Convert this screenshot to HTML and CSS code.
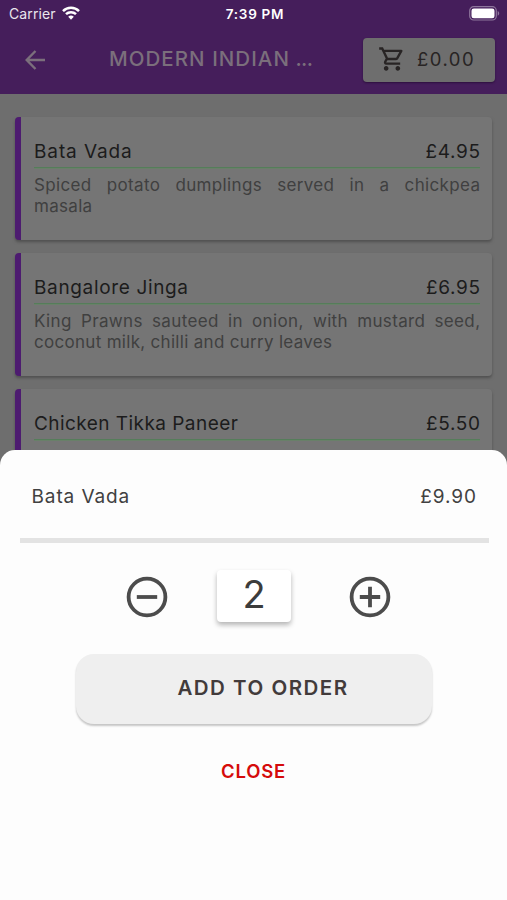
FILE: index.html
```html
<!DOCTYPE html>
<html lang="en">
<head>
<meta charset="utf-8">
<title>Modern Indian menu</title>
<link rel="stylesheet" href="styles.css">
</head>
<body>
<div class="phone">
  <header class="top">
    <div class="status">
      <div class="carrier"><span>Carrier</span>
        <svg width="18" height="14" viewBox="0 0 18 14" fill="none" stroke="#fff" stroke-width="2.5"><path d="M1 5.1a11.3 11.3 0 0 1 16 0M4 8.2a7.1 7.1 0 0 1 10 0"/><path d="M9 13.7 6.2 10.8a4 4 0 0 1 5.6 0z" fill="#fff" stroke="none"/></svg>
      </div>
      <span class="clock">7:39 PM</span>
      <svg class="battery" width="31" height="15" viewBox="0 0 31 15"><rect x=".7" y=".7" width="26.6" height="13.3" rx="4" fill="none" stroke="#8e769c" stroke-width="1.2"/><rect x="2.5" y="2.5" width="23" height="9.7" rx="2.3" fill="#fff"/><path d="M28.7 5v4.7c2-.8 2-3.9 0-4.7z" fill="#8e769c"/></svg>
    </div>
    <div class="nav">
      <svg class="back" width="22" height="20" viewBox="0 0 22 20" fill="none" stroke="#7b6f7c" stroke-width="2.4"><path d="M20 10H2.500M10.500 1 1.700 10l8.800 9"/></svg>
      <h1 class="title"><span class="t-title">MODERN INDIAN</span> <span class="dots">...</span></h1>
      <div class="basket">
        <svg width="28" height="28" viewBox="0 0 24 24" fill="#282424"><path d="M15.55 13c.75 0 1.41-.41 1.75-1.03l3.58-6.49A.996.996 0 0 0 20.01 4H5.21l-.94-2H1v2h2l3.6 7.59-1.35 2.44C4.52 15.37 5.48 17 7 17h12v-2H7l1.1-2h7.45zM6.16 6h12.15l-2.76 5H8.53L6.16 6zM7 18c-1.1 0-1.99.9-1.99 2S5.900 22 7 22s2-.9 2-2-.9-2-2-2zm10 0c-1.100 0-1.990.9-1.990 2s.89 2 1.990 2 2-.9 2-2-.9-2-2-2z"/></svg>
        <span class="t-total">£0.00</span>
      </div>
    </div>
  </header>
  <main class="menu">
    <article class="card">
      <div class="row"><h2 class="n1">Bata Vada</h2><span class="price">£4.95</span></div>
      <p class="desc"><span class="first">Spiced potato dumplings served in a chickpea</span><span class="d1">masala</span></p>
    </article>
    <article class="card">
      <div class="row"><h2 class="n2">Bangalore Jinga</h2><span class="price">£6.95</span></div>
      <p class="desc"><span class="first">King Prawns sauteed in onion, with mustard seed,</span><span class="d2">coconut milk, chilli and curry leaves</span></p>
    </article>
    <article class="card">
      <div class="row"><h2 class="n3">Chicken Tikka Paneer</h2><span class="price">£5.50</span></div>
    </article>
  </main>
  <section class="sheet">
    <div class="item"><span class="n1">Bata Vada</span><span class="sum">£9.90</span></div>
    <div class="rule"></div>
    <div class="stepper">
      <svg width="42" height="42" viewBox="0 0 42 42" fill="none" stroke="#4c4c4c" stroke-width="3.8"><circle cx="21" cy="21" r="18.4"/><path d="M10.800 21h20.400"/></svg>
      <div class="qty">2</div>
      <svg width="42" height="42" viewBox="0 0 42 42" fill="none" stroke="#4c4c4c" stroke-width="3.8"><circle cx="21" cy="21" r="18.4"/><path d="M10.800 21h20.400M21 10.800v20.400"/></svg>
    </div>
    <div class="add"><span class="t-add">ADD TO ORDER</span></div>
    <div class="close"><span class="t-close">CLOSE</span></div>
  </section>
</div>
</body>
</html>
```
FILE: styles.css
```css
* { box-sizing: border-box; }
body { margin: 0; font-family: Inter, "Liberation Sans", sans-serif; }
h1, h2, p { margin: 0; font-weight: 400; }
svg { display: block; flex: none; }
.phone { position: relative; width: 507px; height: 900px; overflow: hidden; background: #6e6e6e; }
.top { height: 94px; background: #451e5b; }
.status { display: grid; grid-template-columns: 1fr auto 1fr; align-items: center; height: 28px; padding: 0 7px 0 9px; color: #fff; }
.carrier { display: flex; align-items: center; gap: 6px; margin-top: -2px; font-size: 14px; letter-spacing: .1px; color: #eae5ed; }
.clock { margin: -1px -1px 0 0; font-size: 13.5px; font-weight: 600; letter-spacing: .7px; }
.battery { justify-self: end; margin-top: -1px; }
.nav { display: flex; align-items: center; height: 63px; padding: 0 12px 0 25px; }
.title { margin: -2px 0 0 62px; width: 254px; font-size: 20.500px; line-height: 26px; color: #7b6f7c; white-space: nowrap; font-weight: 500; }
.t-title { letter-spacing: 1.050px; }
.dots { letter-spacing: -.6px; }
.basket { display: flex; align-items: center; gap: 11px; width: 132px; height: 44px; padding: 0 0 1px 15px; border-radius: 4px; background: #6e6e6e; color: #282424; font-size: 18.500px; box-shadow: 0 1px 2px #2d103d; }
.t-total { letter-spacing: 1.500px; }
.menu { display: flex; flex-direction: column; gap: 13px; padding: 23px 15px 0; }
.card { height: 123px; padding: 21px 12px 0 13px; border-left: 6px solid #4d1b70; border-radius: 4px; background: #757575; box-shadow: 0 2px 3px #505050; }
.row { display: flex; justify-content: space-between; height: 30px; border-bottom: 1px solid #557d5a; box-shadow: 0 1px 0 #698069; color: #1c1c1c; font-size: 19px; line-height: 27px; }
.row h2 { font-size: 19px; }
.row .price { letter-spacing: .65px; margin-right: -.65px; }
.n1 { letter-spacing: .9px; }
.n2 { letter-spacing: .65px; }
.n3 { letter-spacing: .45px; }
.desc { padding-top: 7px; color: #404040; font-size: 17px; line-height: 21px; font-weight: 400; letter-spacing: .3px; }
.desc span { display: block; white-space: nowrap; }
.desc .first { white-space: normal; text-align-last: justify; letter-spacing: .35px; margin-right: -.4px; }
.sheet { position: absolute; left: 0; right: 0; bottom: 0; height: 450px; padding-top: 33px; border-radius: 15px 15px 0 0; background: #fdfdfd; color: #414141; }
.item { display: flex; justify-content: space-between; padding: 0 31px 0 31.500px; font-size: 19px; line-height: 28px; }
.sum { letter-spacing: .9px; margin-right: -.9px; }
.rule { height: 5px; margin: 27px 18px 0 20px; background: #e3e3e3; }
.stepper { display: flex; align-items: center; height: 56px; margin-top: 26px; padding-left: 126px; }
.qty { width: 74px; height: 52px; margin: -2px 58px 0 49px; border-radius: 4px; background: #fff; box-shadow: 0 3px 5px #b5b5b5; color: #3c3c3c; font-size: 38px; line-height: 48px; text-align: center; font-weight: 400; }
.add { display: flex; align-items: center; justify-content: center; width: 356px; height: 70px; margin: 29px 0 0 76px; padding: 0 0 4px 18px; border-radius: 18px; background: #efefef; box-shadow: 0 2px 2px #c6c6c6; color: #423b3b; font-size: 20.500px; font-weight: 600; }
.t-add { letter-spacing: 1.500px; }
.close { margin-top: 34px; color: #d50b0b; font-size: 18.500px; line-height: 26px; font-weight: 600; text-align: center; }
.t-close { letter-spacing: .75px; }
```
